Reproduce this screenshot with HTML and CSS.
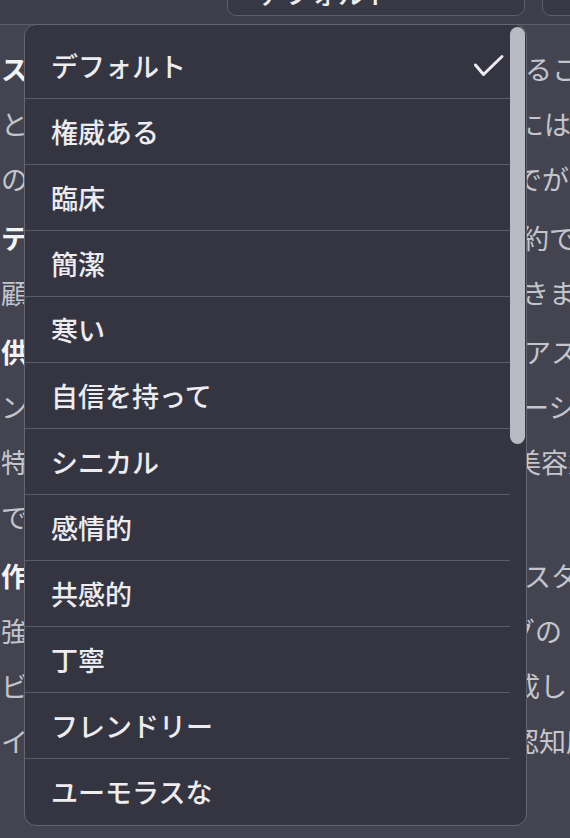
FILE: index.html
```html
<!DOCTYPE html>
<html lang="ja">
<head>
<meta charset="utf-8">
<title>トーン選択</title>
<link rel="stylesheet" href="styles.css">
</head>
<body>
<header class="topbar">
  <div class="select select-main"><span class="select-label">デフォルト</span></div>
  <div class="select select-next"></div>
</header>

<main class="doc">
  <div class="line item s525"><span class="lt"><strong>スタイルの統一：</strong>ブランドの声を統一す</span><span class="rt">ることで</span></div>
  <div class="line s517"><span class="lt">とで、読者は信頼感を抱きやすくなります。さら</span><span class="rt">には</span></div>
  <div class="line s515"><span class="lt">の結果、メッセージの伝わり方が明確になるの</span><span class="rt">でができます。</span></div>
  <div class="line item s522"><span class="lt"><strong>テンプレート：</strong>文章作成の時間を節</span><span class="rt">約できます。</span></div>
  <div class="line s522"><span class="lt">顧客へのメールも短時間で作成することがで</span><span class="rt">きます。</span></div>
  <div class="line item s524"><span class="lt"><strong>供給：</strong>さまざまな場面に合わせて</span><span class="rt">アスタイル</span></div>
  <div class="line s522"><span class="lt">ンを選ぶことで、目的に合ったメッセ</span><span class="rt">ーシを</span></div>
  <div class="line s514"><span class="lt">特に医療、金融、教育、小売、そして</span><span class="rt">美容業界</span></div>
  <div class="line s522"><span class="lt">で役立ちます。</span><span class="rt"></span></div>
  <div class="line item s524"><span class="lt"><strong>作成支援：</strong>文章の雰囲気を選ぶ</span><span class="rt">スタイル</span></div>
  <div class="line s508"><span class="lt">強力な機能により、マーケティン</span><span class="rt">グの</span></div>
  <div class="line s513"><span class="lt">ビジネス文書を素早く作</span><span class="rt">成します</span></div>
  <div class="line s512"><span class="lt">イメージを高め、ブランドの</span><span class="rt">認知度</span></div>
</main>

<div class="menu" role="listbox">
  <ul class="menu-list">
    <li class="menu-item selected">デフォルト
      <svg class="check" viewBox="0 0 32 24" width="32" height="24" aria-hidden="true"><polyline points="2.5,11 10.5,20.5 29,2.5" fill="none" stroke="#ececf1" stroke-width="3" stroke-linecap="round" stroke-linejoin="round"/></svg>
    </li>
    <li class="menu-item">権威ある</li>
    <li class="menu-item">臨床</li>
    <li class="menu-item">簡潔</li>
    <li class="menu-item">寒い</li>
    <li class="menu-item">自信を持って</li>
    <li class="menu-item">シニカル</li>
    <li class="menu-item">感情的</li>
    <li class="menu-item">共感的</li>
    <li class="menu-item">丁寧</li>
    <li class="menu-item">フレンドリー</li>
    <li class="menu-item">ユーモラスな</li>
  </ul>
  <div class="scrollbar"></div>
</div>
</body>
</html>
```

FILE: styles.css
```css
html, body {
  margin: 0;
  padding: 0;
}
body {
  width: 570px;
  height: 838px;
  overflow: hidden;
  background: #434450;
  font-family: "Noto Sans CJK JP", "Noto Sans", sans-serif;
  position: relative;
}

/* top bar */
.topbar {
  height: 24px;
  background: #3e3f4b;
  border-bottom: 1px solid #5d5e68;
  display: flex;
  align-items: flex-end;
  padding-left: 227px;
  gap: 17px;
  overflow: hidden;
}
.select {
  height: 40px;
  margin-bottom: 8px;
  box-sizing: border-box;
  border: 1px solid #5c5d68;
  border-radius: 9px;
  background: #383945;
  flex: 0 0 auto;
  display: flex;
  align-items: flex-end;
}
.select-main {
  width: 298px;
  padding-left: 29px;
}
.select-next {
  width: 80px;
}
.select-label {
  font-size: 27px;
  font-weight: 500;
  color: #ededf2;
  line-height: 27px;
  margin-bottom: 9px;
}

/* background document */
.doc {
  padding-top: 12px;
  margin-left: 1px;
  width: 569px;
  overflow: hidden;
  font-size: 27px;
  color: #c4c5cd;
}
.line {
  display: flex;
  height: 55px;
  line-height: 55px;
  white-space: nowrap;
  overflow: hidden;
}
.line.item {
  margin-top: 4px;
}
.lt {
  flex: 0 0 auto;
  overflow: hidden;
}
.rt {
  flex: 0 0 auto;
}
strong {
  font-weight: 700;
  color: #f3f3f6;
}
.s508 .lt { width: 507px; }
.s512 .lt { width: 511px; }
.s513 .lt { width: 512px; }
.s514 .lt { width: 513px; }
.s515 .lt { width: 514px; }
.s517 .lt { width: 516px; }
.s522 .lt { width: 521px; }
.s524 .lt { width: 523px; }
.s525 .lt { width: 524px; }

/* dropdown menu */
.menu {
  position: absolute;
  left: 24px;
  top: 24px;
  width: 503px;
  height: 802px;
  box-sizing: border-box;
  border: 1px solid #64656f;
  border-radius: 12px;
  background: #353541;
  overflow: hidden;
}
.menu-list {
  list-style: none;
  margin: 0;
  padding: 8px 16px 0 0;
}
.menu-item {
  height: 65px;
  border-bottom: 1px solid #5b5c66;
  display: flex;
  align-items: center;
  justify-content: space-between;
  padding-left: 26px;
  padding-right: 5px;
  font-size: 27px;
  font-weight: 500;
  color: #ececf1;
}
.menu-item:last-child {
  border-bottom: none;
}
.check {
  display: block;
}
.scrollbar {
  position: absolute;
  right: 1px;
  top: 2px;
  width: 15px;
  height: 417px;
  border-radius: 8px;
  background: #b9b9c3;
}
```
